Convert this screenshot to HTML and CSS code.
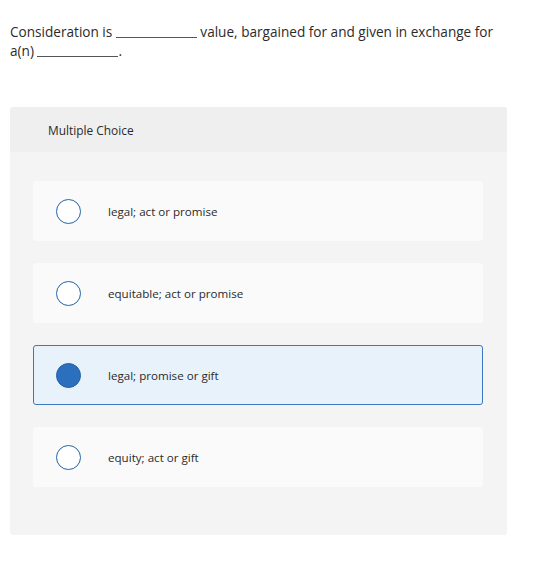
FILE: index.html
```html
<!DOCTYPE html>
<html>
<head>
<meta charset="utf-8">
<link rel="stylesheet" href="styles.css">
</head>
<body>
<div class="page">
  <p class="question"><span>Consideration is</span> <span class="blank"></span> <span>value, bargained for and given in exchange for</span> <span>a(n)</span> <span class="blank"></span><span>.</span></p>
  <div class="panel">
    <div class="panel-head">Multiple Choice</div>
    <div class="options">
      <div class="option"><span class="radio"></span><span class="label">legal; act or promise</span></div>
      <div class="option"><span class="radio"></span><span class="label">equitable; act or promise</span></div>
      <div class="option selected"><span class="radio"></span><span class="label">legal; promise or gift</span></div>
      <div class="option"><span class="radio"></span><span class="label">equity; act or gift</span></div>
    </div>
  </div>
</div>
</body>
</html>
```
FILE: styles.css
```css
html, body {
  margin: 0;
  padding: 0;
  background: #ffffff;
}
body {
  font-family: "Open Sans", Lato, sans-serif;
  color: #2b2b2b;
}
.page {
  padding: 22px 10px 0 10px;
  width: 497px;
}
.question {
  margin: 0;
  width: 505px;
  font-size: 13.6px;
  line-height: 19px;
  color: #2b2b2b;
}
.blank {
  display: inline-block;
  width: 81px;
  height: 1px;
  border-bottom: 1px solid #555555;
  vertical-align: baseline;
  margin-bottom: -1px;
}
.panel {
  margin-top: 47px;
  background: #f4f4f4;
  border-radius: 3px;
  overflow: hidden;
  padding-bottom: 48px;
}
.panel-head {
  background: #efefef;
  height: 45px;
  padding-left: 38px;
  display: flex;
  align-items: center;
  font-size: 11.9px;
  color: #2b2b2b;
}
.options {
  display: flex;
  flex-direction: column;
  gap: 22px;
  padding: 29px 24px 0 23px;
}
.option {
  height: 60px;
  box-sizing: border-box;
  background: #fafafa;
  border: 1px solid #fafafa;
  border-radius: 3px;
  display: flex;
  align-items: center;
  padding-left: 22px;
}
.option.selected {
  background: #e8f2fb;
  border-color: #3a78c4;
}
.radio {
  width: 25px;
  height: 25px;
  box-sizing: border-box;
  border: 1.5px solid #1f65a8;
  border-radius: 50%;
  background: #ffffff;
  flex: none;
}
.selected .radio {
  background: #2c6fbd;
  border-color: #225fa5;
}
.label {
  margin-left: 27px;
  font-size: 11.6px;
  color: #2b2b2b;
}
```
